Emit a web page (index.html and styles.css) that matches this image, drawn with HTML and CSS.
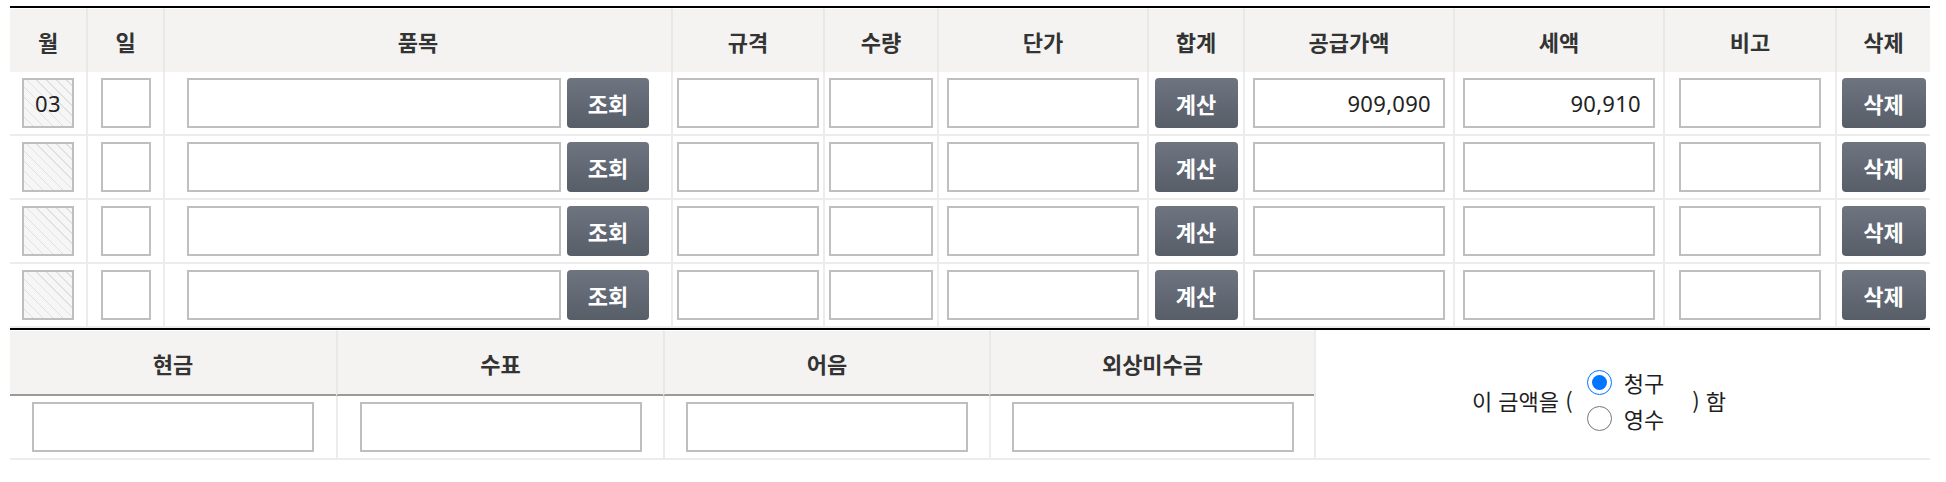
FILE: index.html
```html
<!DOCTYPE html>
<html lang="ko">
<head>
<meta charset="utf-8">
<title>품목 입력</title>
<link rel="stylesheet" href="styles.css">
</head>
<body>
<div class="sheet">
  <div class="items">
    <div class="th">월</div>
    <div class="th">일</div>
    <div class="th">품목</div>
    <div class="th">규격</div>
    <div class="th">수량</div>
    <div class="th">단가</div>
    <div class="th">합계</div>
    <div class="th">공급가액</div>
    <div class="th">세액</div>
    <div class="th">비고</div>
    <div class="th">삭제</div>

    <div class="td"><input class="inp f-month" type="text" value="03" readonly></div>
    <div class="td"><input class="inp f-day" type="text"></div>
    <div class="td td-item"><input class="inp f-item" type="text"><button class="btn btn-wide" type="button">조회</button></div>
    <div class="td"><input class="inp f-spec" type="text"></div>
    <div class="td"><input class="inp f-qty" type="text"></div>
    <div class="td"><input class="inp f-price" type="text"></div>
    <div class="td"><button class="btn" type="button">계산</button></div>
    <div class="td"><input class="inp f-money num" type="text" value="909,090"></div>
    <div class="td"><input class="inp f-money num" type="text" value="90,910"></div>
    <div class="td"><input class="inp f-note" type="text"></div>
    <div class="td"><button class="btn btn-del" type="button">삭제</button></div>

    <div class="td"><input class="inp f-month" type="text" readonly></div>
    <div class="td"><input class="inp f-day" type="text"></div>
    <div class="td td-item"><input class="inp f-item" type="text"><button class="btn btn-wide" type="button">조회</button></div>
    <div class="td"><input class="inp f-spec" type="text"></div>
    <div class="td"><input class="inp f-qty" type="text"></div>
    <div class="td"><input class="inp f-price" type="text"></div>
    <div class="td"><button class="btn" type="button">계산</button></div>
    <div class="td"><input class="inp f-money num" type="text"></div>
    <div class="td"><input class="inp f-money num" type="text"></div>
    <div class="td"><input class="inp f-note" type="text"></div>
    <div class="td"><button class="btn btn-del" type="button">삭제</button></div>

    <div class="td"><input class="inp f-month" type="text" readonly></div>
    <div class="td"><input class="inp f-day" type="text"></div>
    <div class="td td-item"><input class="inp f-item" type="text"><button class="btn btn-wide" type="button">조회</button></div>
    <div class="td"><input class="inp f-spec" type="text"></div>
    <div class="td"><input class="inp f-qty" type="text"></div>
    <div class="td"><input class="inp f-price" type="text"></div>
    <div class="td"><button class="btn" type="button">계산</button></div>
    <div class="td"><input class="inp f-money num" type="text"></div>
    <div class="td"><input class="inp f-money num" type="text"></div>
    <div class="td"><input class="inp f-note" type="text"></div>
    <div class="td"><button class="btn btn-del" type="button">삭제</button></div>

    <div class="td"><input class="inp f-month" type="text" readonly></div>
    <div class="td"><input class="inp f-day" type="text"></div>
    <div class="td td-item"><input class="inp f-item" type="text"><button class="btn btn-wide" type="button">조회</button></div>
    <div class="td"><input class="inp f-spec" type="text"></div>
    <div class="td"><input class="inp f-qty" type="text"></div>
    <div class="td"><input class="inp f-price" type="text"></div>
    <div class="td"><button class="btn" type="button">계산</button></div>
    <div class="td"><input class="inp f-money num" type="text"></div>
    <div class="td"><input class="inp f-money num" type="text"></div>
    <div class="td"><input class="inp f-note" type="text"></div>
    <div class="td"><button class="btn btn-del" type="button">삭제</button></div>
  </div>

  <div class="summary">
    <div class="th">현금</div>
    <div class="th">수표</div>
    <div class="th">어음</div>
    <div class="th">외상미수금</div>
    <div class="claim">
      <span class="claim-text">이 금액을 (</span>
      <div class="choices">
        <label class="choice"><input type="radio" name="kind" checked> 청구</label>
        <label class="choice"><input type="radio" name="kind"> 영수</label>
      </div>
      <span class="claim-text">) 함</span>
    </div>
    <div class="td"><input class="inp f-pay" type="text"></div>
    <div class="td"><input class="inp f-pay" type="text"></div>
    <div class="td"><input class="inp f-pay" type="text"></div>
    <div class="td"><input class="inp f-pay" type="text"></div>
  </div>
</div>
</body>
</html>
```

FILE: styles.css
```css
* { box-sizing: border-box; }

html, body {
  margin: 0;
  padding: 0;
  background: #fff;
}

body {
  font-family: "Noto Sans", "Noto Sans CJK KR", sans-serif;
  color: #222;
}

.sheet {
  width: 1920px;
  margin: 6px 0 0 10px;
}

.items {
  display: grid;
  grid-template-columns: 76px 77px 508px 152px 114px 210px 96px 210px 210px 172px 95px;
  grid-auto-rows: 64px;
  border-top: 2px solid #000;
}

.items .th {
  height: 66px;
}

.th {
  display: flex;
  align-items: center;
  justify-content: center;
  background: #f4f3f1;
  border-top: 1px solid #fff;
  border-bottom: 2px solid #9a9a9a;
  border-left: 2px solid #e8e8e6;
  font-family: "Noto Sans CJK KR", sans-serif;
  font-weight: 700;
  font-size: 22px;
  color: #333;
}

.th:first-child {
  border-left: 0;
}

.td {
  display: flex;
  align-items: center;
  justify-content: center;
  gap: 6px;
  border-left: 2px solid #ececec;
  border-bottom: 2px solid #ececec;
  background: #fff;
}

.items .td:nth-child(11n + 1) {
  border-left: 0;
}

.inp {
  height: 50px;
  margin: 0;
  padding: 0 12px;
  border: 2px solid #bfbfbf;
  border-radius: 0;
  background: #fff;
  font-family: "Noto Sans", "Noto Sans CJK KR", sans-serif;
  font-size: 22px;
  letter-spacing: 0.3px;
  color: #222;
  outline: none;
}

.num {
  text-align: right;
  padding-right: 12px;
}

.f-month {
  width: 52px;
  padding: 0;
  text-align: center;
  background: repeating-linear-gradient(45deg, #f6f6f6 0, #f6f6f6 6px, #e0e0e0 6px, #e0e0e0 7px);
}

.f-day { width: 50px; }
.f-item { width: 374px; }
.f-spec { width: 142px; }
.f-qty { width: 104px; }
.f-price { width: 192px; }
.f-money { width: 192px; }
.f-note { width: 142px; }
.f-pay { width: 282px; }

.btn {
  width: 83px;
  height: 50px;
  margin: 0;
  padding: 0;
  border: 0;
  border-radius: 4px;
  background: linear-gradient(180deg, #6e7480 0%, #585e68 100%);
  color: #fff;
  font-family: "Noto Sans CJK KR", sans-serif;
  font-weight: 700;
  font-size: 22px;
  cursor: pointer;
}

.btn-wide { width: 82px; }
.btn-del { width: 84px; }

.summary {
  display: grid;
  grid-template-columns: 326px 327px 326px 325px 616px;
  grid-template-rows: 66px 64px;
  border-top: 2px solid #000;
}

.summary .td:nth-child(6) {
  border-left: 0;
}

.claim {
  grid-column: 5;
  grid-row: 1 / span 2;
  display: flex;
  align-items: center;
  justify-content: center;
  gap: 14px;
  padding: 12px 48px 0 0;
  border-left: 2px solid #ececec;
  border-bottom: 2px solid #ececec;
  font-family: "Noto Sans CJK KR", sans-serif;
  font-size: 22px;
  color: #1e1e1e;
}

.choices {
  display: flex;
  flex-direction: column;
  gap: 6px;
  padding-right: 14px;
}

.choice {
  display: flex;
  align-items: center;
  gap: 12px;
  line-height: 30px;
}

.choice input {
  width: 25px;
  height: 25px;
  margin: 0;
}
```
